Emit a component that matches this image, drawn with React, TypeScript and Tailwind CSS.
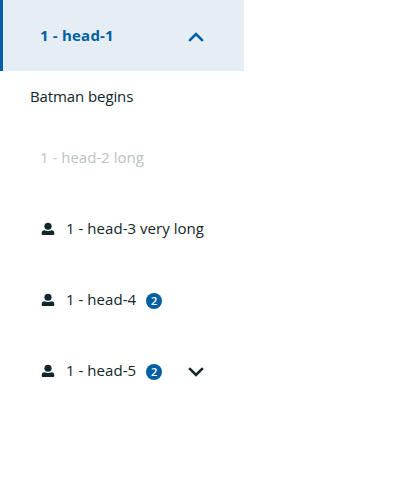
import React from "react";

type Item = {
  label: string;
  active?: boolean;
  disabled?: boolean;
  icon?: boolean;
  badge?: number;
  chevron?: "up" | "down";
  content?: string;
};

const items: Item[] = [
  { label: "1 - head-1", active: true, chevron: "up", content: "Batman begins" },
  { label: "1 - head-2 long", disabled: true },
  { label: "1 - head-3 very long", icon: true },
  { label: "1 - head-4", icon: true, badge: 2 },
  { label: "1 - head-5", icon: true, badge: 2, chevron: "down" },
];

function UserIcon() {
  return (
    <svg viewBox="0 0 16 16" className="mt-px mr-[10px] size-4 shrink-0 fill-current">
      <ellipse cx="8" cy="5.3" rx="3.6" ry="3.5" />
      <path d="M4.4 9.2C6.4 10.2 9.6 10.2 11.6 9.2c1.7.2 2.7 1.2 2.7 2.7v1.2c0 .5-.4.9-.9.9H2.6c-.5 0-.9-.4-.9-.9v-1.2c0-1.5 1-2.5 2.7-2.7z" />
    </svg>
  );
}

function Chevron({ dir }: { dir: "up" | "down" }) {
  return (
    <svg viewBox="0 0 16 16" className="ml-auto mt-[3px] size-4 shrink-0 fill-none stroke-current">
      <path d={dir === "up" ? "M1.9 11.1 8 5l6.1 6.1" : "M1.9 4.8 8 10.9l6.1-6.1"} strokeWidth="2.6" strokeLinecap="round" />
    </svg>
  );
}

function Tab({ item }: { item: Item }) {
  const tone = item.active
    ? "border-[#005fa3] bg-[#e5edf5] font-bold tracking-[0.2px] text-[#005fa3]"
    : item.disabled
      ? "border-transparent text-[#bdc2c3]"
      : "border-transparent tracking-[0.04px] text-[#12262b]";
  return (
    <>
      <button disabled={item.disabled} className={`flex h-[71px] w-full items-center border-l-[3px] pr-10 pl-[37px] text-left whitespace-nowrap ${tone}`}>
        {item.icon && <UserIcon />}
        <span>{item.label}</span>
        {item.badge && (
          <span className="mt-[3px] ml-[10px] flex size-4 items-center justify-center rounded-full bg-[#005fa3] text-[11px] leading-4 font-semibold text-white">{item.badge}</span>
        )}
        {item.chevron && <Chevron dir={item.chevron} />}
      </button>
      {item.content && <div className="h-[51px] pt-[14px] pl-[30px] leading-[22px] tracking-[-0.1px] text-[#12262b]">{item.content}</div>}
    </>
  );
}

export default function App() {
  return (
    <div className="w-[244px] bg-white font-['Open_Sans',sans-serif] text-[15px]">
      {items.map((item) => <Tab key={item.label} item={item} />)}
    </div>
  );
}
